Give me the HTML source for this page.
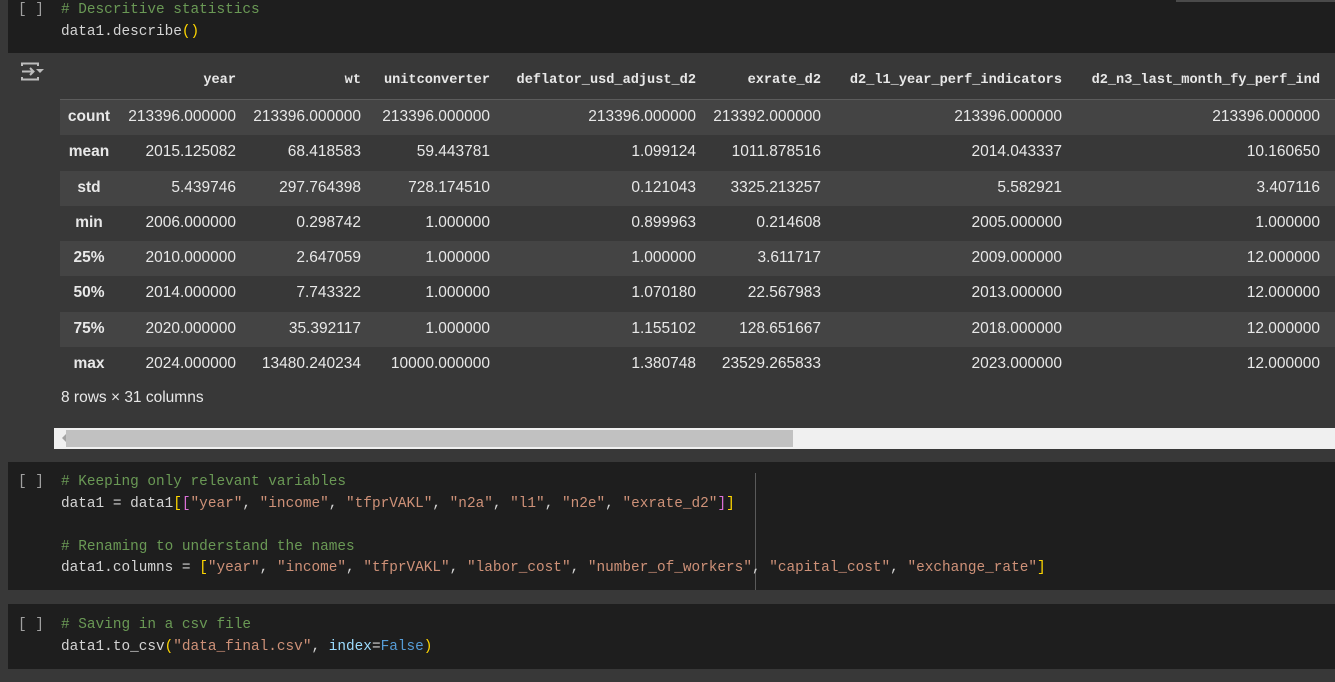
<!DOCTYPE html>
<html><head><meta charset="utf-8"><style>
*{margin:0;padding:0;box-sizing:border-box}
body{width:1335px;height:682px;background:#383838;position:relative;overflow:hidden;font-family:"Liberation Sans",Arial,sans-serif}
.cell{position:absolute;left:8px;right:0;background:#1e1e1e}
.code{position:absolute;left:61px;font-family:"Liberation Mono",monospace;font-size:14.4px;color:#d4d4d4;white-space:pre;line-height:21.5px}
.br{position:absolute;left:18px;font-family:"Liberation Mono",monospace;font-size:14.4px;color:#a0a0a0;white-space:pre;line-height:21.5px}
.c{color:#6a9955}.s{color:#ce9178}.y{color:#ffd700}.p{color:#da70d6}.b{color:#569cd6}.l{color:#9cdcfe}
.row{position:absolute;left:60px;width:1275px;height:35.25px}
.t{position:absolute;color:#e8e8e8;font-size:15.5px;line-height:35px;white-space:pre;text-align:right}
.h{position:absolute;top:72px;font-family:"Liberation Mono",monospace;font-weight:bold;font-size:13.6px;color:#e8e8e8;white-space:pre;text-align:right;line-height:18px}
.lab{font-weight:bold}
</style></head><body>
<div class="cell" style="top:0;height:53px"></div>
<div style="position:absolute;left:1176px;top:0;width:159px;height:2px;background:#4a4a4a"></div>
<div class="br" style="top:0">[ ]</div>
<div class="code" style="top:0"><span class="c"># Descritive statistics</span>
data1.describe<span class="y">()</span></div>

<svg style="position:absolute;left:20px;top:62px" width="26" height="20" viewBox="0 0 26 20"><g fill="none" stroke="#bdbdbd" stroke-width="2"><path d="M2 4V1.5h16V4"/><path d="M2 15v2.5h16V15"/><path d="M2 9.5h11M10 6l3.5 3.5L10 13"/></g><path d="M16 7h8l-4 4z" fill="#bdbdbd"/></svg>

<div style="position:absolute;left:60px;top:98.5px;width:1275px;height:1.5px;background:#5c5c5c"></div>
<div class="h" style="right:1099px">year</div>
<div class="h" style="right:974px">wt</div>
<div class="h" style="right:845px">unitconverter</div>
<div class="h" style="right:639px">deflator_usd_adjust_d2</div>
<div class="h" style="right:514px">exrate_d2</div>
<div class="h" style="right:273px">d2_l1_year_perf_indicators</div>
<div class="h" style="right:15px">d2_n3_last_month_fy_perf_ind</div>

<div class="row" style="top:100px;background:#444"></div>
<div class="row" style="top:170.5px;background:#444"></div>
<div class="row" style="top:241px;background:#444"></div>
<div class="row" style="top:311.5px;background:#444"></div>

<div id="tbl"></div>
<script>
var rows=[["count","213396.000000","213396.000000","213396.000000","213396.000000","213392.000000","213396.000000","213396.000000"],
["mean","2015.125082","68.418583","59.443781","1.099124","1011.878516","2014.043337","10.160650"],
["std","5.439746","297.764398","728.174510","0.121043","3325.213257","5.582921","3.407116"],
["min","2006.000000","0.298742","1.000000","0.899963","0.214608","2005.000000","1.000000"],
["25%","2010.000000","2.647059","1.000000","1.000000","3.611717","2009.000000","12.000000"],
["50%","2014.000000","7.743322","1.000000","1.070180","22.567983","2013.000000","12.000000"],
["75%","2020.000000","35.392117","1.000000","1.155102","128.651667","2018.000000","12.000000"],
["max","2024.000000","13480.240234","10000.000000","1.380748","23529.265833","2023.000000","12.000000"]];
var rights=[1099,974,845,639,514,273,15],h="";
rows.forEach(function(r,i){var top=99+i*35.25;
h+='<div class="t lab" style="top:'+top+'px;left:60px;width:58px;text-align:center">'+r[0]+'</div>';
for(var j=1;j<8;j++)h+='<div class="t" style="top:'+top+'px;right:'+rights[j-1]+'px">'+r[j]+'</div>';});
document.getElementById('tbl').innerHTML=h;
</script>

<div style="position:absolute;left:61px;top:389px;color:#e8e8e8;font-size:15.5px;line-height:18px">8 rows × 31 columns</div>

<div style="position:absolute;left:54px;top:428px;width:1281px;height:21px;background:#f0f0f0"></div>
<div style="position:absolute;left:66px;top:430px;width:727px;height:17px;background:#c1c1c1"></div>
<div style="position:absolute;left:62px;top:434px;width:0;height:0;border-top:4px solid transparent;border-bottom:4px solid transparent;border-right:4px solid #a3a3a3"></div>

<div class="cell" style="top:462px;height:128px"></div>
<div style="position:absolute;left:755px;top:473px;width:1px;height:117px;background:#5a5a5a"></div>
<div class="br" style="top:472px">[ ]</div>
<div class="code" style="top:472px"><span class="c"># Keeping only relevant variables</span>
data1 = data1<span class="y">[</span><span class="p">[</span><span class="s">"year"</span>, <span class="s">"income"</span>, <span class="s">"tfprVAKL"</span>, <span class="s">"n2a"</span>, <span class="s">"l1"</span>, <span class="s">"n2e"</span>, <span class="s">"exrate_d2"</span><span class="p">]</span><span class="y">]</span>

<span class="c"># Renaming to understand the names</span>
data1.columns = <span class="y">[</span><span class="s">"year"</span>, <span class="s">"income"</span>, <span class="s">"tfprVAKL"</span>, <span class="s">"labor_cost"</span>, <span class="s">"number_of_workers"</span>, <span class="s">"capital_cost"</span>, <span class="s">"exchange_rate"</span><span class="y">]</span></div>

<div class="cell" style="top:604px;height:65px"></div>
<div class="br" style="top:615px">[ ]</div>
<div class="code" style="top:615px"><span class="c"># Saving in a csv file</span>
data1.to_csv<span class="y">(</span><span class="s">"data_final.csv"</span>, <span class="l">index</span>=<span class="b">False</span><span class="y">)</span></div>
</body></html>
